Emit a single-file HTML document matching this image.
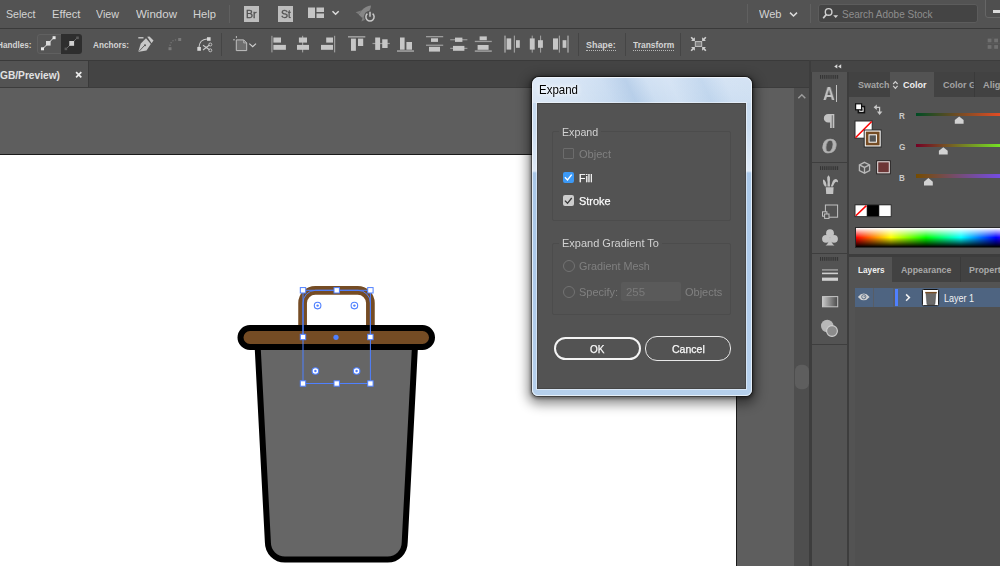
<!DOCTYPE html>
<html><head><meta charset="utf-8"><title>Expand</title>
<style>
*{box-sizing:border-box;margin:0;padding:0}
html,body{width:1000px;height:566px;overflow:hidden;background:#5e5e5e;font-family:"Liberation Sans",sans-serif;}
.a{position:absolute}
.t{position:absolute;white-space:nowrap;line-height:1;color:#d6d6d6}
#menubar{left:0;top:0;width:1000px;height:28px;background:#535353}
#ctrlbar{left:0;top:29px;width:1000px;height:31px;background:#535353}
#line1{left:0;top:28px;width:1000px;height:1px;background:#3a3a3a}
#tabbar{left:0;top:60px;width:810px;height:28px;background:#444444;border-top:1px solid #3a3a3a;border-bottom:1px solid #3c3c3c}
#tab{left:0;top:61px;width:89px;height:26px;background:#535353;border-right:1px solid #3a3a3a}
#canvas{left:0;top:88px;width:794.4px;height:478px;background:#5e5e5e}
#artboard{left:-2px;top:154.3px;width:739px;height:420px;background:#fff;border:1px solid #1a1a1a}
#vscroll{left:794.4px;top:88px;width:15px;height:478px;background:#4e4e4e}
#dock{left:809.4px;top:60px;width:191px;height:506px;background:#3d3d3d}
.sep{position:absolute;width:1px;background:#454545}
</style></head><body>
<div class="a" id="menubar"></div>
<div class="a" id="line1"></div>
<div class="a" id="ctrlbar"></div>
<div class="a" id="tabbar"></div>
<div class="a" id="tab"></div>
<div class="a" id="canvas"></div>
<div class="a" id="artboard"></div>
<div class="a" id="vscroll"></div>
<div class="a" id="dock"></div>
<span class="t" style="left:5.50px;top:8px;font-size:11.6px;font-weight:400;color:#d4d4d4;transform:scaleX(0.9150);transform-origin:0 0;">Select</span>
<span class="t" style="left:51.50px;top:8px;font-size:11.6px;font-weight:400;color:#d4d4d4;transform:scaleX(0.9679);transform-origin:0 0;">Effect</span>
<span class="t" style="left:95.75px;top:8px;font-size:11.6px;font-weight:400;color:#d4d4d4;transform:scaleX(0.9225);transform-origin:0 0;">View</span>
<span class="t" style="left:135.75px;top:8px;font-size:11.6px;font-weight:400;color:#d4d4d4;transform:scaleX(0.9938);transform-origin:0 0;">Window</span>
<span class="t" style="left:193.25px;top:8px;font-size:11.6px;font-weight:400;color:#d4d4d4;transform:scaleX(0.9641);transform-origin:0 0;">Help</span>
<div class="sep" style="left:229px;top:5px;height:18px;background:#606060"></div>
<div class="a" style="left:244px;top:6px;width:15px;height:16px;background:#bdbdbd"></div>
<span class="t" style="left:246.30px;top:9px;font-size:10.6px;font-weight:400;color:#505050;transform:scaleX(1.0000);transform-origin:0 0;-webkit-text-stroke:0.3px #505050;will-change:transform;">Br</span>
<div class="a" style="left:278px;top:6px;width:15px;height:16px;background:#bdbdbd"></div>
<span class="t" style="left:280.60px;top:9px;font-size:10.6px;font-weight:400;color:#505050;transform:scaleX(0.9785);transform-origin:0 0;-webkit-text-stroke:0.3px #505050;will-change:transform;">St</span>
<div class="sep" style="left:747px;top:4px;height:19px;background:#606060"></div>
<span class="t" style="left:758.50px;top:8px;font-size:11.6px;font-weight:400;color:#d4d4d4;transform:scaleX(0.9518);transform-origin:0 0;">Web</span>
<div class="sep" style="left:810px;top:4px;height:19px;background:#606060"></div>
<div class="a" style="left:818.4px;top:4.2px;width:159.6px;height:19px;background:#444444;border:1px solid #5c5c5c;border-radius:3px"></div>
<span class="t" style="left:842.00px;top:8px;font-size:11.6px;font-weight:400;color:#8e8e8e;transform:scaleX(0.8610);transform-origin:0 0;">Search Adobe Stock</span>
<div class="a" style="left:985px;top:-3px;width:20px;height:21px;background:#4f4f4f;border:1px solid #666;border-radius:3px"></div>
<div class="a" style="left:993px;top:10.3px;width:8px;height:2.7px;background:#dcdcdc"></div>
<svg class="a" style="left:0;top:0" width="1000" height="28" viewBox="0 0 1000 28">
<rect x="308" y="7.5" width="7" height="10.5" fill="#c4c4c4" />
<rect x="316.5" y="7.5" width="7.5" height="4.5" fill="#c4c4c4" />
<rect x="316.5" y="13.5" width="7.5" height="4.5" fill="#c4c4c4" />
<path d="M332.5 11.2 L335.6 14.3 L338.7 11.2" fill="none" stroke="#dcdcdc" stroke-width="1.5"/>
<path d="M371 5.6 Q365.6 6 361.6 10.6 L358.6 14.4 L362.2 18 L366 15 Q370.6 11 371 5.6 Z" fill="#868686"/>
<path d="M361.8 10.2 L355.6 12.2 L358.8 14.2 Z" fill="#7c7c7c"/>
<path d="M362.6 17.6 L361.4 21.6 L365.6 19.4 L366 15.2 Z" fill="#7c7c7c"/>
<circle cx="370" cy="16.8" r="6" fill="#535353"/>
<path d="M367.4 13.7 A4.1 4.1 0 1 0 372.6 13.7" fill="none" stroke="#c8c8c8" stroke-width="1.5"/>
<path d="M370 11.8 V16.7" stroke="#c8c8c8" stroke-width="1.5"/>
<path d="M790 12.6 L793.5 16 L797 12.6" fill="none" stroke="#dcdcdc" stroke-width="1.5"/>
<circle cx="828.6" cy="11.9" r="3.3" fill="none" stroke="#cfcfcf" stroke-width="1.4"/>
<path d="M826.4 14.4 L823.2 18.2" stroke="#cfcfcf" stroke-width="1.7"/>
<path d="M833.2 15.2 h5 l-2.5 2.7 z" fill="#cfcfcf"/>
</svg>
<span class="t" style="left:-2.60px;top:40px;font-size:9.8px;font-weight:700;color:#d4d4d4;transform:scaleX(0.8360);transform-origin:0 0;">Handles:</span>
<div class="a" style="left:37.2px;top:33.8px;width:44.8px;height:20.2px;border-radius:3px;background:#555555;border:1px solid #606060"></div>
<div class="a" style="left:61px;top:33.8px;width:21px;height:20.2px;border-radius:0 3px 3px 0;background:#2e2e2e"></div>
<span class="t" style="left:92.50px;top:40px;font-size:9.8px;font-weight:700;color:#d4d4d4;transform:scaleX(0.8369);transform-origin:0 0;">Anchors:</span>
<div class="sep" style="left:221px;top:33px;height:23px"></div>
<div class="sep" style="left:578px;top:33px;height:23px"></div>
<span class="t" style="left:585.75px;top:40px;font-size:9.8px;font-weight:700;color:#d4d4d4;transform:scaleX(0.9105);transform-origin:0 0;">Shape:</span>
<div class="a" style="left:586px;top:50px;width:30px;height:0;border-top:1px dotted #b8b8b8"></div>
<div class="sep" style="left:625px;top:33px;height:23px"></div>
<span class="t" style="left:633.00px;top:40px;font-size:9.8px;font-weight:700;color:#d4d4d4;transform:scaleX(0.8608);transform-origin:0 0;">Transform</span>
<div class="a" style="left:633px;top:50px;width:41px;height:0;border-top:1px dotted #b8b8b8"></div>
<div class="sep" style="left:680px;top:33px;height:23px"></div>
<span class="t" style="left:0.30px;top:70px;font-size:10.6px;font-weight:700;color:#e2e2e2;transform:scaleX(0.9609);transform-origin:0 0;">GB/Preview)</span>
<svg class="a" style="left:0;top:28px" width="1000" height="34" viewBox="0 28 1000 34">
<path d="M42.5 49 L54 37.5" stroke="#e0e0e0" stroke-width="1"/>
<rect x="46" y="41" width="4.6" height="4.6" fill="#d8d8d8" />
<rect x="41" y="47.3" width="3" height="3" fill="#e8e8e8" />
<rect x="52.6" y="36.2" width="3" height="3" fill="#e8e8e8" />
<path d="M66 49 L77.5 37.5" stroke="#6a6a6a" stroke-width="1"/>
<rect x="69.3" y="41" width="4.8" height="4.8" fill="#d0d0d0" />
<rect x="64.6" y="47.6" width="2.6" height="2.6" fill="#5a5a5a" />
<rect x="76.2" y="36.5" width="2.6" height="2.6" fill="#5a5a5a" />
<path d="M138.3 37.8 H143.5" stroke="#d0d0d0" stroke-width="1.3"/>
<path d="M147.2 36.8 L149.5 36.6 L153.5 40.6 L151.6 43.3 Z" fill="#c8c8c8"/>
<path d="M146 38.2 L150.8 44 L146.5 50.5 L139 51.8 L138.4 51.2 L140.8 43.5 Z" fill="#c8c8c8"/>
<path d="M139.5 50.8 L144.5 45.5" stroke="#535353" stroke-width="0.9"/>
<circle cx="145" cy="45.2" r="1" fill="#535353"/>
<rect x="168.5" y="47.2" width="3" height="3" fill="#7a7a7a" />
<rect x="178.2" y="38" width="3" height="3" fill="#7a7a7a" />
<path d="M170 46 Q170.5 40 178 39.5" fill="none" stroke="#7a7a7a" stroke-width="1.1" stroke-dasharray="1.2 1.6"/>
<rect x="197.3" y="47" width="3.6" height="3.8" fill="#d6d6d6" />
<rect x="207" y="37.2" width="3.6" height="3.6" fill="#d6d6d6" />
<path d="M199 47 Q199.5 39.5 207 39" fill="none" stroke="#c8c8c8" stroke-width="1.1"/>
<path d="M203 45.3 L209.5 49.8 M203 50 L209.5 45" stroke="#c8c8c8" stroke-width="1.1"/>
<circle cx="210.3" cy="44.5" r="1.5" fill="none" stroke="#c8c8c8" stroke-width="0.9"/>
<circle cx="210.3" cy="50.3" r="1.5" fill="none" stroke="#c8c8c8" stroke-width="0.9"/>
<path d="M236.3 39.9 H243.7 L246.7 42.9 V50.6 H236.3 Z" fill="#6e6e6e" stroke="#c0c0c0" stroke-width="1"/>
<path d="M243.7 39.9 V42.9 H246.7" fill="none" stroke="#c0c0c0" stroke-width="0.8"/>
<path d="M236.4 36 V38.1 M233.1 39.8 H234.9" stroke="#c8c8c8" stroke-width="0.9"/>
<path d="M249.3 43.6 L252.7 46.6 L256 43.6" fill="none" stroke="#d0d0d0" stroke-width="1.2"/>
<rect x="271.3" y="35.8" width="1.2" height="16.6" fill="#9c9c9c" />
<rect x="273.4" y="37.5" width="7.6" height="5.1" fill="#c6c6c6" />
<rect x="273.4" y="44.9" width="12.5" height="4.9" fill="#c6c6c6" />
<rect x="302" y="35.8" width="1.2" height="16.6" fill="#9c9c9c" />
<rect x="298.9" y="37.5" width="8.1" height="5.1" fill="#c6c6c6" />
<rect x="297" y="44.9" width="12" height="4.9" fill="#c6c6c6" />
<rect x="334" y="35.8" width="1.2" height="16.6" fill="#9c9c9c" />
<rect x="326.2" y="37.5" width="6.8" height="5.1" fill="#c6c6c6" />
<rect x="321" y="44.9" width="12" height="4.9" fill="#c6c6c6" />
<rect x="348" y="36" width="17.3" height="1.6" fill="#9c9c9c" />
<rect x="351" y="38.6" width="4.9" height="12.2" fill="#c6c6c6" />
<rect x="358" y="38.6" width="5.2" height="7.4" fill="#c6c6c6" />
<rect x="372.5" y="42.9" width="17.3" height="1.2" fill="#9c9c9c" />
<rect x="375.2" y="37.5" width="4.9" height="12.4" fill="#c6c6c6" />
<rect x="382.2" y="39.3" width="5.4" height="8.7" fill="#c6c6c6" />
<rect x="397" y="50.2" width="17" height="1.7" fill="#9c9c9c" />
<rect x="400" y="37.5" width="4.6" height="12.2" fill="#c6c6c6" />
<rect x="406.4" y="42" width="5.6" height="7.7" fill="#c6c6c6" />
<rect x="426" y="36" width="17.2" height="1.3" fill="#9c9c9c" />
<rect x="426" y="44.6" width="17.2" height="1.3" fill="#9c9c9c" />
<rect x="431" y="38.3" width="7" height="3.6" fill="#c6c6c6" />
<rect x="429" y="46.8" width="11" height="4.8" fill="#c6c6c6" />
<rect x="450.2" y="39.2" width="17.2" height="1.1" fill="#9c9c9c" />
<rect x="450.2" y="47.8" width="17.2" height="1.1" fill="#9c9c9c" />
<rect x="455" y="37.6" width="7.4" height="4.3" fill="#c6c6c6" />
<rect x="453" y="45.9" width="11.4" height="4.9" fill="#c6c6c6" />
<rect x="474.8" y="40.8" width="17" height="1.3" fill="#9c9c9c" />
<rect x="474.8" y="50.3" width="17" height="1.6" fill="#9c9c9c" />
<rect x="479.6" y="36.4" width="7.2" height="3.8" fill="#c6c6c6" />
<rect x="477.6" y="45" width="11" height="4.8" fill="#c6c6c6" />
<rect x="504.2" y="35.6" width="1.6" height="17" fill="#9c9c9c" />
<rect x="513.8" y="35.6" width="1.2" height="17" fill="#9c9c9c" />
<rect x="506.6" y="38.4" width="4.6" height="11.2" fill="#c6c6c6" />
<rect x="516" y="40.2" width="3.8" height="7.6" fill="#c6c6c6" />
<rect x="531.7" y="35.6" width="1.1" height="17" fill="#9c9c9c" />
<rect x="540" y="35.6" width="1.1" height="17" fill="#9c9c9c" />
<rect x="529.8" y="38.4" width="4.9" height="11.2" fill="#c6c6c6" />
<rect x="538" y="40.2" width="4.9" height="7.6" fill="#c6c6c6" />
<rect x="558.8" y="35.6" width="1.2" height="17" fill="#9c9c9c" />
<rect x="567.2" y="35.6" width="1.6" height="17" fill="#9c9c9c" />
<rect x="553" y="38.4" width="5" height="11.2" fill="#c6c6c6" />
<rect x="562.6" y="40.2" width="3.8" height="7.6" fill="#c6c6c6" />
<rect x="695.3" y="41.6" width="6.4" height="4.8" fill="#7e7e7e" stroke="#c4c4c4" stroke-width="1"/>
<path d="M694.90 41.10 L694.90 37.20 L693.60 38.50 L691.70 36.70 L690.60 37.80 L692.40 39.70 L691.00 41.10 Z" fill="#cfcfcf"/>
<path d="M702.10 41.10 L702.10 37.20 L703.40 38.50 L705.30 36.70 L706.40 37.80 L704.60 39.70 L706.00 41.10 Z" fill="#cfcfcf"/>
<path d="M694.90 46.90 L694.90 50.80 L693.60 49.50 L691.70 51.30 L690.60 50.20 L692.40 48.30 L691.00 46.90 Z" fill="#cfcfcf"/>
<path d="M702.10 46.90 L702.10 50.80 L703.40 49.50 L705.30 51.30 L706.40 50.20 L704.60 48.30 L706.00 46.90 Z" fill="#cfcfcf"/>
<rect x="987.7" y="38.6" width="3.8" height="3.7" fill="#707070" />
<rect x="987.7" y="45.1" width="3.8" height="3.7" fill="#707070" />
<rect x="994.2" y="38.6" width="3.8" height="3.7" fill="#707070" />
<rect x="994.2" y="45.1" width="3.8" height="3.7" fill="#707070" />
<rect x="986.5" y="43.3" width="13.5" height="0.6" fill="#5e5e5e" />
<rect x="992.6" y="37" width="0.6" height="13" fill="#5e5e5e" />
</svg>
<svg class="a" style="left:74px;top:69.5px" width="10" height="10" viewBox="0 0 10 10"><path d="M2.1 2.1 L7.3 7.3 M7.3 2.1 L2.1 7.3" stroke="#ededed" stroke-width="1.7"/></svg>
<svg class="a" style="left:0;top:155px" width="736" height="411" viewBox="0 155 736 411">
<path d="M302.6 340 V303 A12.7 12.7 0 0 1 315.3 290.4 H357.7 A12.7 12.7 0 0 1 370.4 303 V340" fill="none" stroke="#754c24" stroke-width="8.7"/>
<path d="M257.3 340 H415.3 L404.7 542.5 A17 17 0 0 1 387.7 559.5 H284.9 A17 17 0 0 1 267.9 542.5 Z" fill="#666666" stroke="#000" stroke-width="6" stroke-linejoin="round"/>
<rect x="240.5" y="328" width="191.5" height="19" rx="9.5" fill="#754c24" stroke="#000" stroke-width="6"/>
<rect x="303" y="290.3" width="67.4" height="93.2" fill="none" stroke="#4f80ff" stroke-width="1"/>
<path d="M303 337 V303 A12.5 12.5 0 0 1 315.5 290.3 H358 A12.5 12.5 0 0 1 370.4 303 V337" fill="none" stroke="#4f80ff" stroke-width="1"/>
<rect x="300.3" y="287.6" width="5.4" height="5.4" fill="#fff" stroke="#4f80ff" stroke-width="1"/>
<rect x="300.3" y="334.3" width="5.4" height="5.4" fill="#fff" stroke="#4f80ff" stroke-width="1"/>
<rect x="300.3" y="380.8" width="5.4" height="5.4" fill="#fff" stroke="#4f80ff" stroke-width="1"/>
<rect x="334" y="287.6" width="5.4" height="5.4" fill="#fff" stroke="#4f80ff" stroke-width="1"/>
<rect x="334" y="380.8" width="5.4" height="5.4" fill="#fff" stroke="#4f80ff" stroke-width="1"/>
<rect x="367.7" y="287.6" width="5.4" height="5.4" fill="#fff" stroke="#4f80ff" stroke-width="1"/>
<rect x="367.7" y="334.3" width="5.4" height="5.4" fill="#fff" stroke="#4f80ff" stroke-width="1"/>
<rect x="367.7" y="380.8" width="5.4" height="5.4" fill="#fff" stroke="#4f80ff" stroke-width="1"/>
<circle cx="336" cy="337.3" r="2.6" fill="#4f80ff"/>
<circle cx="317.6" cy="305.6" r="3.3" fill="#fff" stroke="#4f80ff" stroke-width="1.1"/>
<circle cx="317.6" cy="305.6" r="1.2" fill="#4f80ff"/>
<circle cx="354.4" cy="305.6" r="3.3" fill="#fff" stroke="#4f80ff" stroke-width="1.1"/>
<circle cx="354.4" cy="305.6" r="1.2" fill="#4f80ff"/>
<circle cx="315.4" cy="371" r="3.3" fill="#fff" stroke="#4f80ff" stroke-width="1.1"/>
<circle cx="315.4" cy="371" r="1.2" fill="#4f80ff"/>
<circle cx="356.6" cy="371" r="3.3" fill="#fff" stroke="#4f80ff" stroke-width="1.1"/>
<circle cx="356.6" cy="371" r="1.2" fill="#4f80ff"/>
</svg>
<svg class="a" style="left:794px;top:88px" width="16" height="478" viewBox="794 88 16 478">
<path d="M798.3 98.3 L801.8 94.8 L805.3 98.3" fill="none" stroke="#9c9c9c" stroke-width="1.5"/>
<rect x="795" y="364.8" width="14" height="24.4" rx="6" fill="#5e5e5e"/>
</svg>
<div class="a" style="left:811.4px;top:61px;width:189px;height:10.5px;background:#454545"></div>
<div class="a" style="left:812px;top:72px;width:34.5px;height:494px;background:#535353"></div>
<div class="a" style="left:812px;top:162px;width:34.5px;height:1px;background:#3e3e3e"></div>
<div class="a" style="left:812px;top:253px;width:34.5px;height:1px;background:#3e3e3e"></div>
<div class="a" style="left:812px;top:344px;width:34.5px;height:1px;background:#3e3e3e"></div>
<div class="a" style="left:849px;top:72px;width:151px;height:182px;background:#535353"></div>
<div class="a" style="left:849px;top:72px;width:151px;height:25px;background:#424242"></div>
<div class="a" style="left:889.5px;top:72px;width:44.5px;height:25px;background:#535353"></div>
<div class="a" style="left:974px;top:72px;width:1px;height:25px;background:#3a3a3a"></div>
<span class="t" style="left:857.60px;top:80px;font-size:9.6px;font-weight:700;color:#a4a4a4;transform:scaleX(0.9343);transform-origin:0 0;">Swatch</span>
<span class="t" style="left:902.60px;top:80px;font-size:9.6px;font-weight:700;color:#f0f0f0;transform:scaleX(0.9376);transform-origin:0 0;">Color</span>
<span class="t" style="left:943.00px;top:80px;font-size:9.6px;font-weight:700;color:#a4a4a4;transform:scaleX(0.9376);transform-origin:0 0;clip-path:inset(0 2.5px 0 0);">Color G</span>
<span class="t" style="left:982.50px;top:80px;font-size:9.6px;font-weight:700;color:#a4a4a4;transform:scaleX(0.9585);transform-origin:0 0;">Align</span>
<span class="t" style="left:898.80px;top:112px;font-size:8.8px;font-weight:700;color:#c8c8c8;transform:scaleX(0.9127);transform-origin:0 0;">R</span>
<span class="t" style="left:898.50px;top:143px;font-size:8.8px;font-weight:700;color:#c8c8c8;transform:scaleX(0.9350);transform-origin:0 0;">G</span>
<span class="t" style="left:898.80px;top:174px;font-size:8.8px;font-weight:700;color:#c8c8c8;transform:scaleX(0.9127);transform-origin:0 0;">B</span>
<div class="a" style="left:916px;top:112.6px;width:94px;height:3.6px;background:linear-gradient(90deg,rgb(0,76,36),rgb(255,76,36))"></div>
<div class="a" style="left:916px;top:143.5px;width:94px;height:3.6px;background:linear-gradient(90deg,rgb(117,0,36),rgb(117,255,36))"></div>
<div class="a" style="left:916px;top:174.4px;width:94px;height:3.6px;background:linear-gradient(90deg,rgb(117,76,0),rgb(117,76,255))"></div>
<div class="a" style="left:855px;top:226.5px;width:150px;height:21px;background:#2a2a2a"></div>
<div class="a" style="left:856px;top:227.5px;width:210px;height:19px;background:linear-gradient(180deg,rgba(255,255,255,1) 0%,rgba(255,255,255,0) 50%,rgba(0,0,0,0) 50%,rgba(0,0,0,1) 100%),linear-gradient(90deg,#f00 0%,#ff0 16.67%,#0f0 33.33%,#0ff 50%,#00f 66.67%,#f0f 83.33%,#f00 100%)"></div>
<div class="a" style="left:849px;top:257px;width:151px;height:309px;background:#535353"></div>
<div class="a" style="left:849px;top:257px;width:151px;height:24.6px;background:#424242"></div>
<div class="a" style="left:849px;top:257px;width:43px;height:24.6px;background:#535353"></div>
<div class="a" style="left:960px;top:257px;width:1px;height:24.6px;background:#3a3a3a"></div>
<div class="a" style="left:854.5px;top:288.3px;width:146px;height:278px;background:#505050"></div>
<div class="a" style="left:854.5px;top:288.2px;width:146px;height:18.7px;background:#4e6481"></div>
<div class="a" style="left:873.2px;top:288.3px;width:1.2px;height:18.6px;background:#575d66"></div>
<div class="a" style="left:893.4px;top:288.3px;width:1.2px;height:18.6px;background:#575d66"></div>
<div class="a" style="left:894.8px;top:289.2px;width:3.3px;height:17.2px;background:#4f80ff"></div>
<span class="t" style="left:858.00px;top:265px;font-size:9.6px;font-weight:700;color:#f0f0f0;transform:scaleX(0.8561);transform-origin:0 0;">Layers</span>
<span class="t" style="left:901.40px;top:265px;font-size:9.6px;font-weight:700;color:#a8a8a8;transform:scaleX(0.9171);transform-origin:0 0;">Appearance</span>
<span class="t" style="left:969.40px;top:265px;font-size:9.6px;font-weight:700;color:#a8a8a8;transform:scaleX(0.9267);transform-origin:0 0;">Properties</span>
<span class="t" style="left:943.80px;top:293px;font-size:10.5px;font-weight:400;color:#f2f2f2;transform:scaleX(0.8594);transform-origin:0 0;">Layer 1</span>
<span class="t" style="left:823.00px;top:86px;font-size:17.6px;font-weight:700;color:#c2c2c2;transform:scaleX(0.9284);transform-origin:0 0;will-change:transform;">A</span>
<div class="a" style="left:836px;top:85.3px;width:1px;height:16.7px;background:#c2c2c2"></div>
<span class="t" style="left:822.3px;top:134.6px;font-family:'Liberation Serif',serif;font-style:italic;font-weight:700;font-size:22px;color:#b4b4b4;-webkit-text-stroke:0.7px #b4b4b4;will-change:transform;transform:scaleX(0.92);transform-origin:0 0">O</span>
<svg class="a" style="left:810px;top:60px" width="190" height="506" viewBox="810 60 190 506">
<path d="M828.1 113.9 H834.3 V128 H832.6 V115.3 H831.8 V128 H830.1 V122.4 H828.1 A4.25 4.25 0 0 1 828.1 113.9 Z" fill="#c2c2c2"/>
<path d="M837.3 64.3 V68.5 L834.2 66.4 Z M841.2 64.3 V68.5 L838.1 66.4 Z" fill="#d8d8d8"/>
<rect x="820" y="75" width="1" height="3.8" fill="#343434" />
<rect x="821.9" y="75" width="1" height="3.8" fill="#343434" />
<rect x="823.8" y="75" width="1" height="3.8" fill="#343434" />
<rect x="825.7" y="75" width="1" height="3.8" fill="#343434" />
<rect x="827.6" y="75" width="1" height="3.8" fill="#343434" />
<rect x="829.5" y="75" width="1" height="3.8" fill="#343434" />
<rect x="831.4" y="75" width="1" height="3.8" fill="#343434" />
<rect x="833.3" y="75" width="1" height="3.8" fill="#343434" />
<rect x="835.2" y="75" width="1" height="3.8" fill="#343434" />
<rect x="837.1" y="75" width="1" height="3.8" fill="#343434" />
<rect x="820" y="166.2" width="1" height="3.8" fill="#343434" />
<rect x="821.9" y="166.2" width="1" height="3.8" fill="#343434" />
<rect x="823.8" y="166.2" width="1" height="3.8" fill="#343434" />
<rect x="825.7" y="166.2" width="1" height="3.8" fill="#343434" />
<rect x="827.6" y="166.2" width="1" height="3.8" fill="#343434" />
<rect x="829.5" y="166.2" width="1" height="3.8" fill="#343434" />
<rect x="831.4" y="166.2" width="1" height="3.8" fill="#343434" />
<rect x="833.3" y="166.2" width="1" height="3.8" fill="#343434" />
<rect x="835.2" y="166.2" width="1" height="3.8" fill="#343434" />
<rect x="837.1" y="166.2" width="1" height="3.8" fill="#343434" />
<rect x="820" y="257" width="1" height="3.8" fill="#343434" />
<rect x="821.9" y="257" width="1" height="3.8" fill="#343434" />
<rect x="823.8" y="257" width="1" height="3.8" fill="#343434" />
<rect x="825.7" y="257" width="1" height="3.8" fill="#343434" />
<rect x="827.6" y="257" width="1" height="3.8" fill="#343434" />
<rect x="829.5" y="257" width="1" height="3.8" fill="#343434" />
<rect x="831.4" y="257" width="1" height="3.8" fill="#343434" />
<rect x="833.3" y="257" width="1" height="3.8" fill="#343434" />
<rect x="835.2" y="257" width="1" height="3.8" fill="#343434" />
<rect x="837.1" y="257" width="1" height="3.8" fill="#343434" />
<path d="M893.2 84 L895.4 81.5 L897.6 84 M893.2 85.8 L895.4 88.3 L897.6 85.8" fill="none" stroke="#d0d0d0" stroke-width="1.15"/>
<rect x="858.4" y="106.6" width="6" height="6" fill="#fff" stroke="#111" stroke-width="1.6"/>
<rect x="860.2" y="108.4" width="2.4" height="2.4" fill="#333" />
<rect x="855.6" y="103.8" width="6" height="6" fill="#fff" stroke="#111" stroke-width="1.2"/>
<path d="M875 107.3 H879.6 V112.6" fill="none" stroke="#c8c8c8" stroke-width="1.2"/>
<path d="M876.8 104.6 L873.6 107.3 L876.8 110 Z" fill="#c8c8c8"/>
<path d="M876.9 111.5 L879.6 114.9 L882.4 111.5 Z" fill="#c8c8c8"/>
<rect x="855" y="121" width="17.2" height="17.2" fill="#fff" stroke="#2a2a2a" stroke-width="1"/>
<path d="M855.5 137.7 L871.7 121.5" stroke="#f00" stroke-width="1.5"/>
<rect x="864.2" y="130" width="17" height="17" fill="#fff" stroke="#2a2a2a" stroke-width="1"/>
<rect x="865.8" y="131.6" width="13.8" height="13.8" fill="#754c24" />
<rect x="869" y="134.8" width="7.4" height="7.4" fill="#555" stroke="#fff" stroke-width="1"/>
<path d="M864.5 162.3 L869.6 164.8 V170.6 L864.5 173.2 L859.4 170.6 V164.8 Z M859.4 164.8 L864.5 167.4 L869.6 164.8 M864.5 167.4 V173.2" fill="none" stroke="#b8b8b8" stroke-width="1.3"/>
<rect x="876.7" y="160.8" width="13.6" height="13" fill="#6d3636" stroke="#2a2a2a" stroke-width="1"/>
<rect x="877.7" y="161.8" width="11.6" height="11" fill="none" stroke="#e8e8e8" stroke-width="1"/>
<path d="M959.2 116.4 L963.6 120 V123.8 H954.8 V120 Z" fill="#d2d2d2"/>
<path d="M943.3 147.2 L947.7 150.8 V154.6 H938.9 V150.8 Z" fill="#d2d2d2"/>
<path d="M928.4 178.1 L932.8 181.7 V185.5 H924 V181.7 Z" fill="#d2d2d2"/>
<rect x="854.5" y="204.3" width="37" height="12.8" fill="#2e2e2e" />
<rect x="855.5" y="205.3" width="11.2" height="10.8" fill="#fff" />
<path d="M855.8 215.8 L866.4 205.6" stroke="#f00" stroke-width="1.5"/>
<rect x="867.3" y="205.3" width="11.4" height="10.8" fill="#000" />
<rect x="879.3" y="205.3" width="11.4" height="10.8" fill="#fff" />
<path d="M825.8 187.2 H833.6 L833.2 194 H826.2 Z" fill="#c2c2c2"/>
<path d="M827.2 179.5 Q826.6 176.6 828.6 175.2 Q830.4 176.8 830 179.6 L829.8 182 L830 186.6 H827.4 L827.6 182 Z" fill="#c2c2c2"/>
<path d="M823 181.2 Q822.6 180 823.8 179.6 Q826.4 181.6 826.6 186.6 H825 Q822.8 184.4 823 181.2 Z" fill="#c2c2c2"/>
<path d="M830.8 186.6 L832.6 181.6 Q833.6 178.6 836.6 179.2 Q838.4 180 838 182.4 Q836.2 180.8 834.6 183 L832.8 186.6 Z" fill="#c2c2c2"/>
<rect x="825.4" y="205" width="12.2" height="12.2" fill="none" stroke="#c2c2c2" stroke-width="1"/>
<rect x="822.5" y="211.8" width="4.4" height="4.4" fill="#535353" stroke="#c2c2c2" stroke-width="1"/>
<rect x="824.6" y="214" width="4.4" height="4.4" fill="#535353" stroke="#c2c2c2" stroke-width="1"/>
<circle cx="830" cy="233.2" r="3.9" fill="#c2c2c2"/><circle cx="826" cy="238.8" r="3.9" fill="#c2c2c2"/><circle cx="834" cy="238.8" r="3.9" fill="#c2c2c2"/>
<path d="M829.3 237 H830.7 Q830.8 243.5 834.5 245.4 H825.5 Q829.2 243.5 829.3 237 Z" fill="#c2c2c2"/>
<rect x="822" y="269.5" width="16" height="0.9" fill="#d0d0d0" />
<rect x="822" y="272.6" width="16" height="1.6" fill="#d0d0d0" />
<rect x="822" y="277.6" width="16" height="3.2" fill="#d0d0d0" />
<defs><linearGradient id="gr" x1="0" x2="1" y1="0" y2="0"><stop offset="0" stop-color="#c8c8c8"/><stop offset="1" stop-color="#4a4a4a"/></linearGradient></defs>
<rect x="822.5" y="296.6" width="15.2" height="10.2" fill="url(#gr)" stroke="#c6c6c6" stroke-width="1"/>
<circle cx="827.2" cy="326" r="6.2" fill="#b8b8b8"/>
<circle cx="832" cy="331" r="5.4" fill="#8c8c8c" stroke="#d0d0d0" stroke-width="1.1"/>
<path d="M857.9 296.9 Q863.7 290 869.6 296.9 Q863.7 303.8 857.9 296.9 Z" fill="#d2d2d2"/>
<circle cx="863.8" cy="296.8" r="2.1" fill="none" stroke="#5d6f86" stroke-width="1"/>
<circle cx="864.2" cy="296.6" r="0.7" fill="#5d6f86"/>
<path d="M906.1 294.4 L909.4 297.6 L906.1 300.8" fill="none" stroke="#f0f0f0" stroke-width="1.5"/>
<rect x="922.4" y="289.5" width="16.2" height="16.2" fill="#fff" stroke="#111" stroke-width="1" rx="1"/>
<path d="M926 293.2 H935.9 L935 304 Q934.9 305.1 933.8 305.1 H928.1 Q927 305.1 926.9 304 Z" fill="#6a6a6a" stroke="#333" stroke-width="0.4"/>
<rect x="925.2" y="291.9" width="11.6" height="1.5" fill="#754c24" />
</svg>
<div class="a" style="left:532px;top:77px;width:220px;height:318.5px;border-radius:7px 7px 6px 6px;box-shadow:0 0 0 1px rgba(0,0,0,.4),0 1px 3px 2px rgba(0,0,0,.3),0 4px 12px 4px rgba(0,0,0,.45);background:linear-gradient(180deg,#d0e0f3 0px,#c8dbf0 26px,#c9dcf0 50px,#dfeaf7 94px,#a9c7e7 96px,#aecaea 200px,#b6d0ec 100%)"></div>
<div class="a" style="left:533px;top:78px;width:218px;height:25px;border-radius:6px 6px 0 0;background:linear-gradient(65deg,rgba(255,255,255,.35) 0%,rgba(255,255,255,.2) 22%,rgba(255,255,255,0) 34%,rgba(140,175,215,.30) 45%,rgba(255,255,255,.05) 54%,rgba(255,255,255,.15) 64%,rgba(150,185,220,.18) 78%,rgba(255,255,255,.12) 88%,rgba(255,255,255,.1) 100%)"></div>
<div class="a" style="left:532px;top:77px;width:220px;height:318.5px;border-radius:7px 7px 6px 6px;border:1px solid rgba(255,255,255,.65)"></div>
<div class="a" style="left:537.4px;top:103.2px;width:208.8px;height:286.3px;background:#535353;border:1px solid #454545;box-shadow:0 0 0 1px rgba(255,255,255,.45)"></div>
<span class="t" style="left:538.90px;top:85px;font-size:11.9px;font-weight:400;color:#000;transform:scaleX(0.9663);transform-origin:0 0;text-shadow:0 0 4px #fff,0 0 6px #fff;">Expand</span>
<div class="a" style="left:552.3px;top:131.2px;width:178.7px;height:90.3px;border:1px solid #4c4c4c;border-radius:2px"></div>
<div class="a" style="left:559px;top:126px;width:42px;height:12px;background:#535353"></div>
<div class="a" style="left:552.3px;top:242.7px;width:178.7px;height:72.8px;border:1px solid #4c4c4c;border-radius:2px"></div>
<div class="a" style="left:559px;top:237px;width:103px;height:12px;background:#535353"></div>
<span class="t" style="left:561.80px;top:127px;font-size:11.1px;font-weight:400;color:#d2d2d2;transform:scaleX(0.9616);transform-origin:0 0;">Expand</span>
<span class="t" style="left:562.00px;top:238px;font-size:11.1px;font-weight:400;color:#d2d2d2;transform:scaleX(0.9907);transform-origin:0 0;">Expand Gradient To</span>
<div class="a" style="left:563px;top:148.3px;width:10.8px;height:10.7px;border:1px solid #6c6c6c;border-radius:1px"></div>
<span class="t" style="left:579.00px;top:149px;font-size:11.1px;font-weight:400;color:#808080;transform:scaleX(0.9975);transform-origin:0 0;">Object</span>
<div class="a" style="left:562.6px;top:171.6px;width:11.4px;height:11px;background:#3c99f6;border-radius:2px"></div>
<span class="t" style="left:578.70px;top:173px;font-size:11.1px;font-weight:400;color:#fafafa;transform:scaleX(0.9522);transform-origin:0 0;-webkit-text-stroke:0.25px #fafafa;">Fill</span>
<div class="a" style="left:562.6px;top:195.1px;width:11.4px;height:11px;background:#cdcdcd;border-radius:2px"></div>
<span class="t" style="left:578.70px;top:196px;font-size:11.1px;font-weight:400;color:#fafafa;transform:scaleX(0.9819);transform-origin:0 0;-webkit-text-stroke:0.25px #fafafa;">Stroke</span>
<div class="a" style="left:562.8px;top:259.8px;width:12.2px;height:12.2px;border:1px solid #727272;border-radius:50%"></div>
<span class="t" style="left:578.60px;top:261px;font-size:11.1px;font-weight:400;color:#808080;transform:scaleX(0.9739);transform-origin:0 0;">Gradient Mesh</span>
<div class="a" style="left:562.8px;top:285.9px;width:12.2px;height:12.2px;border:1px solid #727272;border-radius:50%"></div>
<span class="t" style="left:578.60px;top:287px;font-size:11.1px;font-weight:400;color:#808080;transform:scaleX(0.9903);transform-origin:0 0;">Specify:</span>
<div class="a" style="left:620.7px;top:282.2px;width:60.8px;height:19.1px;background:#5a5a5a;border-radius:2px"></div>
<span class="t" style="left:625.70px;top:287px;font-size:11.1px;font-weight:400;color:#7a7a7a;transform:scaleX(1.0314);transform-origin:0 0;">255</span>
<span class="t" style="left:684.50px;top:287px;font-size:11.1px;font-weight:400;color:#808080;transform:scaleX(0.9913);transform-origin:0 0;">Objects</span>
<div class="a" style="left:554px;top:336.6px;width:86.5px;height:23.8px;border:2px solid #f4f4f4;border-radius:12px"></div>
<div class="a" style="left:645.2px;top:336.4px;width:86.2px;height:24.2px;border:1.4px solid #e8e8e8;border-radius:12px"></div>
<span class="t" style="left:590.00px;top:344px;font-size:11.1px;font-weight:400;color:#fafafa;transform:scaleX(0.8979);transform-origin:0 0;-webkit-text-stroke:0.25px #fafafa;">OK</span>
<span class="t" style="left:671.80px;top:344px;font-size:11.1px;font-weight:400;color:#fafafa;transform:scaleX(0.9494);transform-origin:0 0;-webkit-text-stroke:0.25px #fafafa;">Cancel</span>
<svg class="a" style="left:560px;top:168px" width="20" height="42" viewBox="560 168 20 42">
<path d="M564.9 177.2 L567.5 179.9 L571.7 174.6" fill="none" stroke="#fff" stroke-width="1.35"/>
<path d="M564.9 200.6 L567.5 203.3 L571.7 198" fill="none" stroke="#3a3a3a" stroke-width="1.35"/>
</svg>
</body></html>
